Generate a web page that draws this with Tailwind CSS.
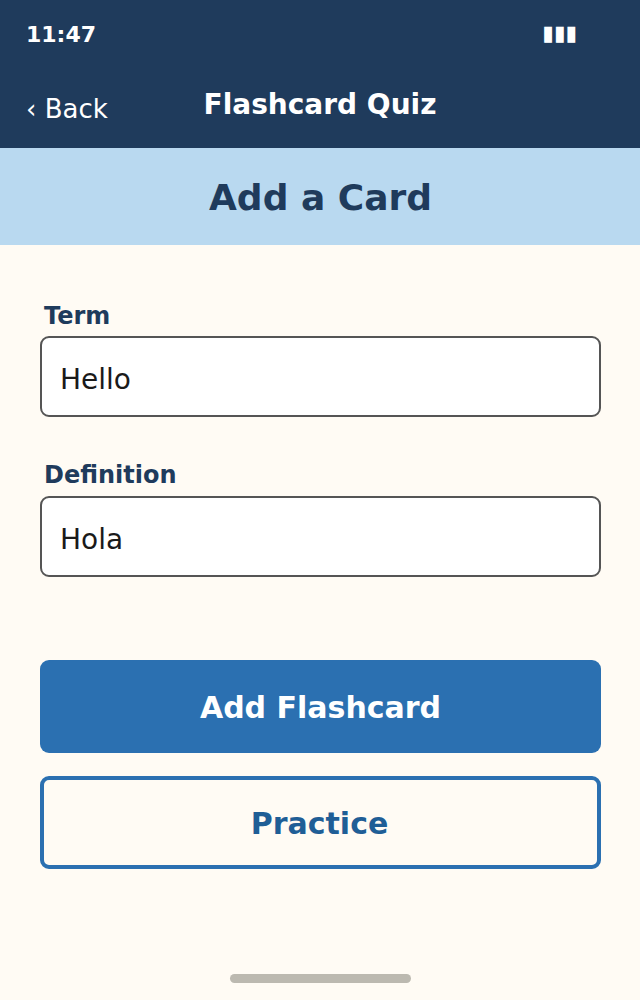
<!DOCTYPE html>
<html>
<head>
<meta charset="utf-8">
<script src="https://cdn.jsdelivr.net/npm/@tailwindcss/browser@4"></script>
</head>
<body class="m-0">
<div class="flex h-[1000px] w-[640px] flex-col overflow-hidden bg-[#fffbf4] font-['DejaVu_Sans',sans-serif]">
  <header class="h-[148px] shrink-0 bg-[#1f3b5c] text-white">
    <div class="flex h-[68px] items-center justify-between pt-[1px] pl-[26px] pr-[63px]">
      <span class="text-[22px] leading-none font-bold">11:47</span>
      <span class="mb-[2px] text-[21px] leading-none">▮▮▮</span>
    </div>
    <div class="relative h-[80px]">
      <span class="absolute top-[26px] left-[26px] text-[26px] leading-[30px]">‹ Back</span>
      <h1 class="pt-[21px] text-center text-[28px] leading-[32px] font-bold">Flashcard Quiz</h1>
    </div>
  </header>
  <div class="flex h-[97px] shrink-0 items-center justify-center bg-[#b9d9f0] pt-[2px] pl-[1px]">
    <h2 class="text-[36px] leading-[40px] font-bold text-[#1f3b5c]">Add a Card</h2>
  </div>
  <main class="flex flex-col px-[40px] pt-[57px]">
    <label class="pl-[4px] text-[24px] leading-[28px] font-bold text-[#1f3b5c]">Term</label>
    <div class="mt-[6px] flex h-[81px] w-[561px] items-center rounded-[9px] border-2 border-[#555555] bg-white pt-[6px] pl-[18px] text-[28px] text-[#1a1a1a]">Hello</div>
    <label class="mt-[44px] pl-[4px] text-[24px] leading-[28px] font-bold text-[#1f3b5c]">Definition</label>
    <div class="mt-[7px] flex h-[81px] w-[561px] items-center rounded-[9px] border-2 border-[#555555] bg-white pt-[6px] pl-[18px] text-[28px] text-[#1a1a1a]">Hola</div>
    <button class="mt-[83px] flex h-[93px] w-[561px] items-center justify-center rounded-[9px] bg-[#2b70b1] pt-[2px] text-[30px] font-bold text-white">Add Flashcard</button>
    <button class="mt-[23px] flex h-[93px] w-[561px] items-center justify-center rounded-[9px] border-4 border-[#2b70b1] pt-[2px] pr-[2px] text-[30px] font-bold text-[#1f5e96]">Practice</button>
  </main>
  <div class="mt-[105px] ml-[230px] h-[9px] w-[181px] rounded-full bg-[#bcb9b0]"></div>
</div>
</body>
</html>
